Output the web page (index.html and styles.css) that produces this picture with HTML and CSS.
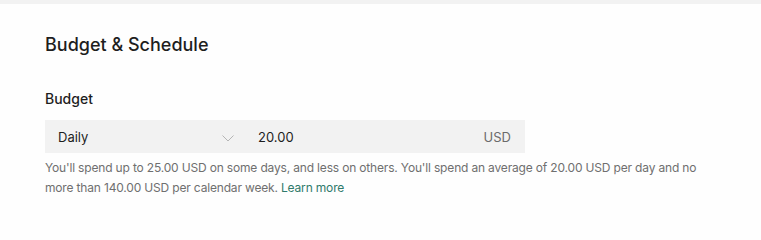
FILE: index.html
```html
<!DOCTYPE html>
<html lang="en">
<head>
<meta charset="utf-8">
<title>Budget &amp; Schedule</title>
<link rel="stylesheet" href="styles.css">
</head>
<body>
<div class="topband"></div>
<section class="card">
  <h2 class="title">Budget &amp; Schedule</h2>
  <div class="field">
    <div class="label">Budget</div>
    <div class="inputrow">
      <div class="select">
        <span class="select-value">Daily</span>
        <svg class="chevron" width="12" height="7" viewBox="0 0 12 7" aria-hidden="true"><path d="M0.5 0.5 L6 6 L11.5 0.5" fill="none" stroke="#b5b5b5" stroke-width="1"/></svg>
      </div>
      <div class="amount">
        <span class="amount-value">20.00</span>
        <span class="currency">USD</span>
      </div>
    </div>
    <p class="help">You'll spend up to 25.00 USD on some days, and less on others. You'll spend an average of 20.00 USD per day and no more than 140.00 USD per calendar week. <a class="link" href="#">Learn more</a></p>
  </div>
</section>
</body>
</html>
```
FILE: styles.css
```css
html, body {
  margin: 0;
  padding: 0;
  background: #fefefe;
  font-family: Inter, "Noto Sans", sans-serif;
  color: #1c1c1c;
}
.topband {
  height: 4px;
  background: #f2f2f2;
}
.card {
  padding: 29px 45px 0 45px;
}
.title {
  margin: 0;
  font-size: 18px;
  font-weight: 500;
  line-height: 24px;
  color: #1e1e1e;
}
.field {
  margin-top: 33px;
}
.label {
  font-size: 14px;
  font-weight: 500;
  line-height: 18px;
  color: #1e1e1e;
}
.inputrow {
  margin-top: 12px;
  display: flex;
  width: 480px;
  height: 33px;
  background: #f2f2f2;
  font-size: 13px;
}
.select {
  width: 200px;
  display: flex;
  align-items: center;
  justify-content: space-between;
  padding: 0 13px;
  box-sizing: border-box;
}
.chevron {
  margin-top: 4px;
  margin-right: -2px;
}
.amount {
  flex: 1;
  display: flex;
  align-items: center;
  justify-content: space-between;
  padding: 0 14px 0 13px;
}
.select-value, .amount-value {
  color: #1e1e1e;
}
.currency {
  color: #6b6b6b;
}
.help {
  margin: 5px 0 0 0;
  width: 660px;
  font-size: 12px;
  letter-spacing: -0.17px;
  line-height: 20px;
  color: #6f6f6f;
}
.link {
  color: #2f7a6b;
  text-decoration: none;
}
```
